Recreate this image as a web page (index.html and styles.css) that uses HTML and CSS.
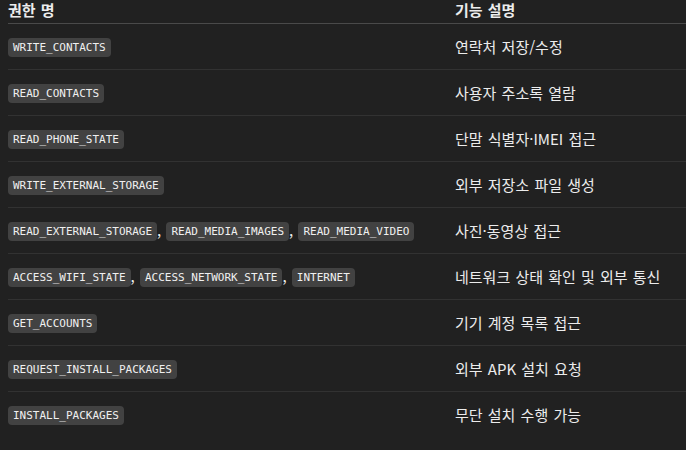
FILE: index.html
```html
<!DOCTYPE html>
<html lang="ko">

<head>
    <meta charset="UTF-8">
    <meta name="viewport" content="width=device-width, initial-scale=1.0">
    <title>권한 목록</title>
    <link rel="stylesheet" href="styles.css">
</head>

<body>
    <table class="perm-table">
        <thead>
            <tr>
                <th class="col-name">권한 명</th>
                <th>기능 설명</th>
            </tr>
        </thead>
        <tbody>
            <tr>
                <td><code>WRITE_CONTACTS</code></td>
                <td>연락처 저장/수정</td>
            </tr>
            <tr>
                <td><code>READ_CONTACTS</code></td>
                <td>사용자 주소록 열람</td>
            </tr>
            <tr>
                <td><code>READ_PHONE_STATE</code></td>
                <td>단말 식별자·IMEI 접근</td>
            </tr>
            <tr>
                <td><code>WRITE_EXTERNAL_STORAGE</code></td>
                <td>외부 저장소 파일 생성</td>
            </tr>
            <tr>
                <td><code>READ_EXTERNAL_STORAGE</code>, <code>READ_MEDIA_IMAGES</code>, <code>READ_MEDIA_VIDEO</code></td>
                <td>사진·동영상 접근</td>
            </tr>
            <tr>
                <td><code>ACCESS_WIFI_STATE</code>, <code>ACCESS_NETWORK_STATE</code>, <code>INTERNET</code></td>
                <td>네트워크 상태 확인 및 외부 통신</td>
            </tr>
            <tr>
                <td><code>GET_ACCOUNTS</code></td>
                <td>기기 계정 목록 접근</td>
            </tr>
            <tr>
                <td><code>REQUEST_INSTALL_PACKAGES</code></td>
                <td>외부 APK 설치 요청</td>
            </tr>
            <tr>
                <td><code>INSTALL_PACKAGES</code></td>
                <td>무단 설치 수행 가능</td>
            </tr>
        </tbody>
    </table>
</body>

</html>
```

FILE: styles.css
```css
body {
    margin: 0px;
    padding: 0px 0px 0px 8px;
    background-color: #212121;
    color: #ececec;
    font-family: "Noto Sans CJK KR", "Noto Sans", sans-serif;
    font-size: 15px;
    word-spacing: 1px;
    overflow: hidden;
}

.perm-table {
    border-collapse: collapse;
    width: 100%;
}

.perm-table th {
    text-align: left;
    font-weight: 700;
    line-height: 17px;
    padding: 1px 0px 5px 0px;
    border-bottom: 1px solid #4a4a4a;
}

.perm-table .col-name {
    width: 447px;
}

.perm-table td {
    height: 45px;
    padding: 0px;
    line-height: 20px;
    vertical-align: middle;
    border-bottom: 1px solid #323232;
}

.perm-table tbody tr:last-child td {
    border-bottom: none;
}

code {
    font-family: "DejaVu Sans Mono", monospace;
    font-size: 11px;
    line-height: 19px;
    word-spacing: 0px;
    display: inline-block;
    padding: 0px 5px;
    border-radius: 4px;
    background-color: #424242;
    color: #f0f0f0;
    vertical-align: middle;
}
```
